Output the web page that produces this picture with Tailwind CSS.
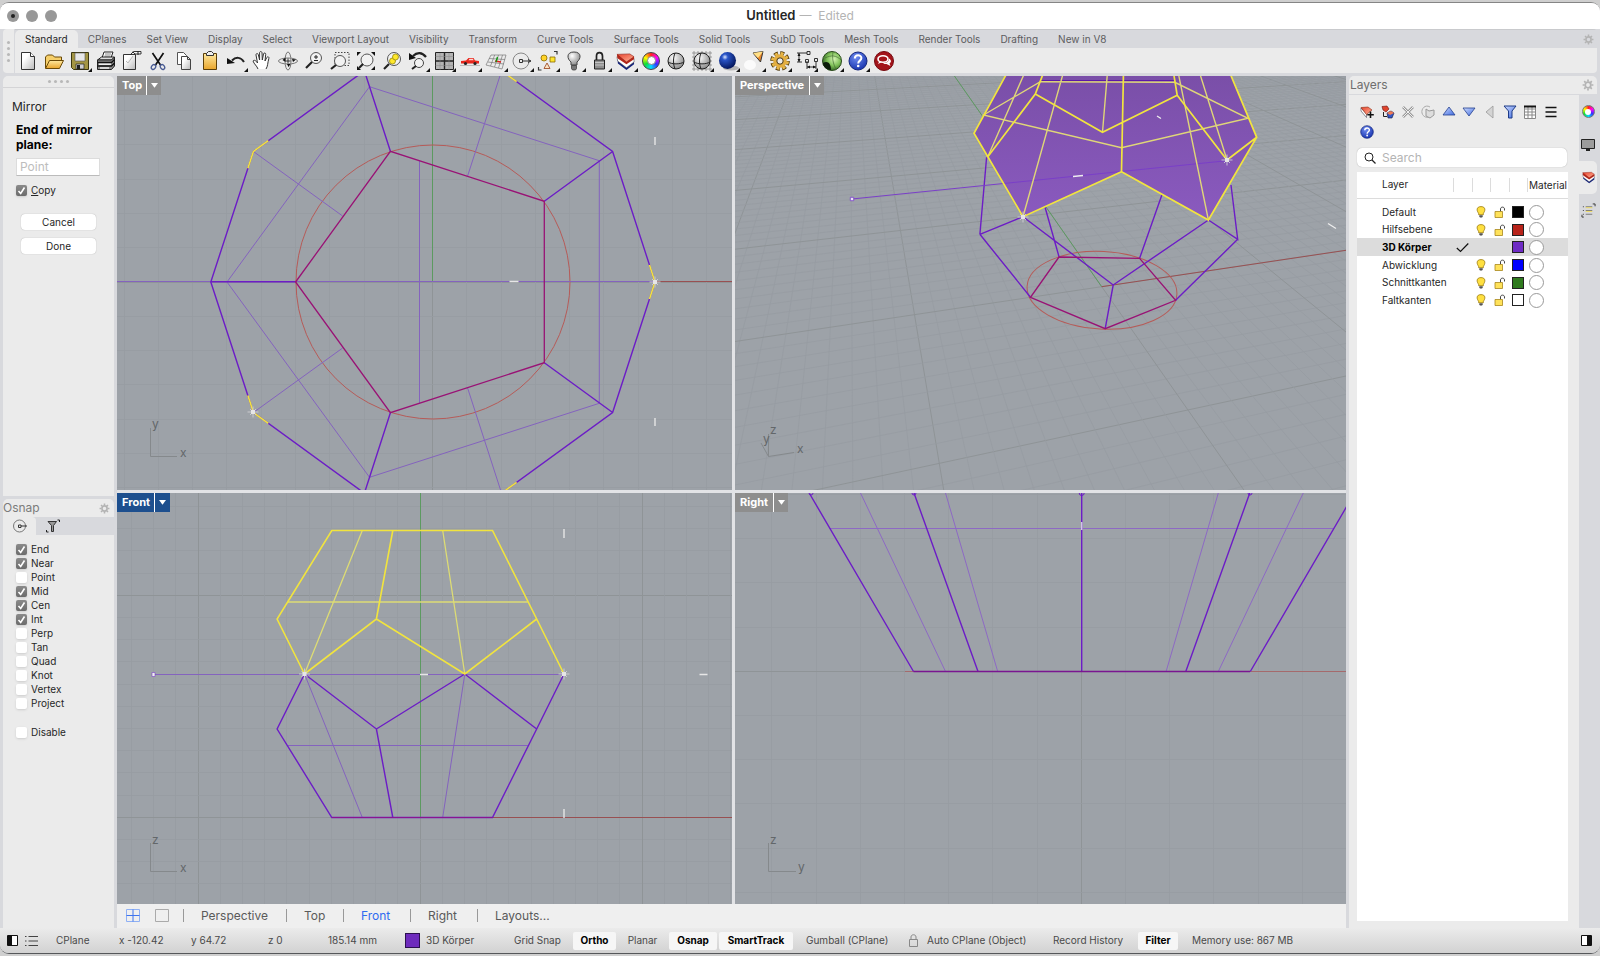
<!DOCTYPE html>
<html lang="en">
<head>
  <meta charset="UTF-8" />
  <title>Untitled — Edited</title>
  <meta name="viewport" content="width=device-width, initial-scale=1.0" />
  <script src="https://cdn.jsdelivr.net/npm/@tailwindcss/browser@4"></script>
</head>
<body class="h-screen overflow-hidden bg-[#cfcfcf] font-['Inter','Liberation_Sans',sans-serif] text-[10px] text-[#262626]">

  <!-- Shared symbols -->
  <svg class="absolute w-0 h-0" aria-hidden="true">
    <defs>
      <linearGradient id="paper" x1="0" y1="0" x2="1" y2="1"><stop offset=".3" stop-color="#fff" /><stop offset="1" stop-color="#b9b9b9" /></linearGradient>
      <linearGradient id="gold" x1="0" y1="0" x2="0" y2="1"><stop offset="0" stop-color="#ffe9a0" /><stop offset="1" stop-color="#e9a52b" /></linearGradient>
      <linearGradient id="blueTri" x1="0" y1="0" x2="1" y2="1"><stop offset="0" stop-color="#cfdcff" /><stop offset="1" stop-color="#3f6be0" /></linearGradient>
      <linearGradient id="solid" x1="0" y1="0" x2="0" y2="1"><stop offset="0" stop-color="#7a4fa8" /><stop offset="1" stop-color="#8a5abf" /></linearGradient>
      <linearGradient id="redTop" x1="0" y1="0" x2="1" y2="1"><stop offset="0" stop-color="#e8402a" /><stop offset="1" stop-color="#ffb59a" /></linearGradient>
      <radialGradient id="ball" cx=".35" cy=".3" r=".8"><stop offset="0" stop-color="#fff" /><stop offset="1" stop-color="#808080" /></radialGradient>
      <radialGradient id="blueBall" cx=".35" cy=".3" r=".7"><stop offset="0" stop-color="#dfe9ff" /><stop offset=".25" stop-color="#2a55c8" /><stop offset="1" stop-color="#05185e" /></radialGradient>
      <radialGradient id="greenBall" cx=".6" cy=".4" r=".7"><stop offset="0" stop-color="#d6f5b4" /><stop offset=".5" stop-color="#7fc058" /><stop offset="1" stop-color="#1c4a14" /></radialGradient>
      <radialGradient id="helpBall" cx=".4" cy=".3" r=".7"><stop offset="0" stop-color="#6f8cf0" /><stop offset="1" stop-color="#1a36b0" /></radialGradient>
      <symbol id="more" viewBox="0 0 26 24"><path d="M25 19v4h-4z" fill="#111" /></symbol>
      <symbol id="gear" viewBox="0 0 12 12">
        <g stroke="#b4b4b4" fill="none"><circle cx="6" cy="6" r="2.800" stroke-width="1.800" /><path d="M6 .6v2M6 9.400v2M.6 6h2M9.400 6h2M2.200 2.200l1.400 1.400M8.400 8.400l1.400 1.400M9.800 2.200L8.400 3.600M2.200 9.800l1.400-1.400" stroke-width="1.700" /></g>
      </symbol>
      <symbol id="layers" viewBox="0 0 20 20">
        <path d="M1.500 7l.5 5 9 7 8-6V9l-8 5z" fill="#16247c" />
        <path d="M1 5l.7 4.500 9.300 7 8-6V7z" fill="#fff" stroke="#333" stroke-width=".5" />
        <path d="M1 3l.5 3.500L11 13l8-5.500V5z" fill="#b3261a" />
        <path d="M1 2.500L14.500 2 19 5l-8 5.500z" fill="url(#redTop)" stroke="#8a1a10" stroke-width=".6" />
      </symbol>
      <symbol id="help" viewBox="0 0 20 20">
        <circle cx="10" cy="10" r="9" fill="url(#helpBall)" stroke="#14267c" /><path d="M6.800 7.600c0-4.600 6.600-4.300 6.600-.5 0 2.500-3.200 2.600-3.200 5.300" fill="none" stroke="#fff" stroke-width="2" /><circle cx="10.200" cy="15" r="1.300" fill="#fff" />
      </symbol>
      <symbol id="bulb" viewBox="0 0 10 12"><path d="M5 .6c5 0 4.400 4.400 2.400 6.600v1.500H2.600V7.200C.6 5 0 .6 5 .6z" fill="#ffe040" stroke="#9a7a10" stroke-width=".8" /><path d="M3.300 9.200h3.400v1.700l-1.700.8-1.700-.8z" fill="#555" /></symbol>
      <symbol id="unlocked" viewBox="0 0 12 12"><path d="M6.500 5.500V3c0-2.500 4-2.500 4 0v1.500" fill="none" stroke="#444" /><path d="M1 5.500h7.500v6H1z" fill="#ffe25a" stroke="#a8861c" stroke-width=".8" /></symbol>
      <symbol id="tick" viewBox="0 0 13 13"><path d="M.8 7l3.700 3.500L12.300 2.500" fill="none" stroke="#111" stroke-width="1.200" /></symbol>
      <symbol id="snapPoint" viewBox="-6 -6 12 12" overflow="visible"><path d="M-5.500 0h11M0-5.500v11M-3-3l6 6M3-3l-6 6" stroke="#cfcfd2" stroke-width=".9" /><path d="M-2-2h4v4h-4z" fill="#e6e6e6" /></symbol>
    </defs>
  </svg>

  <div class="flex flex-col h-full pt-[2px] pb-[2px]">
    <div class="flex flex-col flex-1 min-h-0 overflow-hidden rounded-[9px] border-t border-b border-t-[#858585] border-b-[#55575a] bg-[#d8d9dd]">

      <!-- Title bar -->
      <header class="relative flex items-center justify-center gap-[4px] h-[26px] shrink-0 bg-white text-[13px]">
        <div class="absolute left-[7px] flex gap-[7px]">
          <button aria-label="Close" class="flex items-center justify-center size-[12px] rounded-full bg-[#989898]"><span class="size-[4px] rounded-full bg-[#222]"></span></button>
          <button aria-label="Minimize" class="size-[12px] rounded-full bg-[#989898]"></button>
          <button aria-label="Zoom" class="size-[12px] rounded-full bg-[#989898]"></button>
        </div>
        <h1 class="font-semibold">Untitled</h1>
        <span class="text-[12px] text-[#b4b4b4]">— &nbsp;Edited</span>
      </header>

      <!-- Toolbar tabs -->
      <div class="flex h-[44px] shrink-0 mx-[3px] rounded-[4px] overflow-hidden">
        <div class="flex flex-col items-center justify-center gap-[3px] w-[12px] bg-[#ebebeb] border-r border-[#d8d9dd]">
          <i class="size-[3px] rounded-full bg-[#b8b8b8]"></i><i class="size-[3px] rounded-full bg-[#b8b8b8]"></i><i class="size-[3px] rounded-full bg-[#b8b8b8]"></i><i class="size-[3px] rounded-full bg-[#b8b8b8]"></i>
        </div>
        <div class="flex-1 min-w-0">
          <nav class="flex items-center h-[19px] border-t border-[#c9cacd] text-[#5c5c5e] whitespace-nowrap">
            <button class="h-full px-[10px] rounded-t-[5px] bg-[#ebebeb] text-[#262626]">Standard</button>
            <button class="px-[10px]">CPlanes</button>
            <button class="px-[10px]">Set View</button>
            <button class="px-[10px]">Display</button>
            <button class="px-[10px]">Select</button>
            <button class="px-[10px]">Viewport Layout</button>
            <button class="px-[10px]">Visibility</button>
            <button class="px-[10px]">Transform</button>
            <button class="px-[10px]">Curve Tools</button>
            <button class="px-[10px]">Surface Tools</button>
            <button class="px-[10px]">Solid Tools</button>
            <button class="px-[10px]">SubD Tools</button>
            <button class="px-[10px]">Mesh Tools</button>
            <button class="px-[10px]">Render Tools</button>
            <button class="px-[10px]">Drafting</button>
            <button class="px-[10px]">New in V8</button>
            <button aria-label="Toolbar options" class="ml-auto mr-[3px]"><svg class="size-[11px]"><use href="#gear" /></svg></button>
          </nav>

          <!-- Standard toolbar -->
          <div class="flex items-center h-[25px] bg-[#ebebeb]">
            <div class="flex w-[882px] [&>button]:flex-1 [&_svg]:w-[26px] [&_svg]:h-[24px]">
              <button aria-label="New"><svg viewBox="0 0 26 24"><path d="M6.500 3.500h9l4 4v13h-13z" fill="url(#paper)" stroke="#333" /><path d="M15.500 3.500v4h4" fill="#fff" stroke="#333" /></svg></button>
              <button aria-label="Open"><svg viewBox="0 0 26 24"><path d="M4.500 19V8l2-2h5l2 2h7v3" fill="#f6cf6a" stroke="#6a4a08" /><path d="M4.500 19.500l4-8h14l-4 8z" fill="url(#gold)" stroke="#6a4a08" /></svg></button>
              <button aria-label="Save"><svg viewBox="0 0 26 24"><path d="M4.500 3.500h17v17h-15l-2-2z" fill="#a39543" stroke="#3a3510" /><path d="M8 4h10v8H8z" fill="#e8e8e8" stroke="#555" stroke-width=".6" /><path d="M9 15h8v5H9z" fill="#d0d0d0" stroke="#222" stroke-width=".7" /><path d="M10 16h3v4h-3z" fill="#222" /><use href="#more" /></svg></button>
              <button aria-label="Print"><svg viewBox="0 0 26 24"><path d="M9 9l2-6h9l-2 6z" fill="#fff" stroke="#222" /><path d="M12 5h6M11.500 7h6" stroke="#888" /><path d="M4.500 11l4-3h13l-3 3z" fill="#ddd" stroke="#222" /><path d="M4.500 11h14l3-3v9l-3 3.500h-14z" fill="#8d8d8d" stroke="#222" /><path d="M4.500 13.500h14l3-3M4.500 17h14l3-3" fill="none" stroke="#111" stroke-width="1.400" /><path d="M7 19h9M6 15.200h12" stroke="#eee" stroke-width="1.500" /></svg></button>
              <button aria-label="Document properties"><svg viewBox="0 0 26 24"><path d="M4.500 5.500h12v15h-12z" fill="url(#paper)" stroke="#333" /><path d="M7 12l2 2 5-7" fill="none" stroke="#bbb" /><path d="M11 6l3-3 2 2h6V2.500h-7l-2 1" fill="#f4f4f4" stroke="#222" stroke-width=".9" /><path d="M19 2v4" stroke="#222" /></svg></button>
              <button aria-label="Cut"><svg viewBox="0 0 26 24"><path d="M7.500 4l8 12M18.500 4l-8 12" stroke="#111" stroke-width="1.700" /><g fill="none" stroke="#4a5c94" stroke-width="1.300"><ellipse cx="8.500" cy="18" rx="2" ry="2.600" transform="rotate(35 8.500 18)" /><ellipse cx="17.500" cy="18" rx="2" ry="2.600" transform="rotate(-35 17.500 18)" /></g></svg></button>
              <button aria-label="Copy"><svg viewBox="0 0 26 24"><path d="M6.500 3.500h6l3 3v9h-9z" fill="#fff" stroke="#555" /><path d="M10.500 7.500h6l3 3v10h-9z" fill="url(#paper)" stroke="#444" /><path d="M16.500 7.500v3h3" fill="none" stroke="#444" /></svg></button>
              <button aria-label="Paste"><svg viewBox="0 0 26 24"><path d="M6.500 4.500h13v16h-13z" fill="url(#gold)" stroke="#5c3f08" /><path d="M9.500 6.500v-2l2-2h3l2 2v2z" fill="#eee" stroke="#333" /></svg></button>
              <button aria-label="Undo"><svg viewBox="0 0 26 24"><path d="M9 11.500c4-4 9-3.500 12 1.500" fill="none" stroke="#222" stroke-width="2" /><path d="M4 9v6l8-1z" fill="#111" /><use href="#more" /></svg></button>
              <button aria-label="Pan"><svg viewBox="0 0 26 24"><path d="M9 20c-1-3-4-5-5-8 1-1.500 3-.5 4.500 2L7 6c0-2 2-2 2.400 0l1.200 5V4c0-2 2.300-2 2.400 0l.3 7 1.200-6c.5-1.700 2.500-1.200 2.200.5L16 12l1.800-3.500c1-1.400 2.700-.5 2 1.200C18.500 14 19 17 17 20" fill="#fff" stroke="#333" /></svg></button>
              <button aria-label="Rotate view"><svg viewBox="0 0 26 24"><g fill="none" stroke="#777"><ellipse cx="13" cy="12" rx="9.500" ry="3" /><ellipse cx="13" cy="12" rx="3" ry="9" /></g><path d="M10.500 8.500v4.500l-3-2zM17 10l4 .5-3 2.500zM12 15l3.500 0-2 3z" fill="#111" /><path d="M13 9.500v5M10.500 12h5" stroke="#111" stroke-width=".8" /></svg></button>
              <button aria-label="Zoom dynamic"><svg viewBox="0 0 26 24"><circle cx="15" cy="9" r="5.500" fill="#f2f2f2" stroke="#555" /><path d="M15 6v4M13 8h4M13 11.500h4" stroke="#222" /><path d="M11 13l-6 6" stroke="#222" stroke-width="2.200" /></svg></button>
              <button aria-label="Zoom window"><svg viewBox="0 0 26 24"><path d="M8 3.500h14v13H8z" fill="none" stroke="#444" stroke-dasharray="1.500 1.500" /><circle cx="13" cy="12" r="5.500" fill="#f2f2f2" stroke="#555" /><path d="M9 16l-5 4" stroke="#222" stroke-width="2.200" /></svg></button>
              <button aria-label="Zoom extents"><svg viewBox="0 0 26 24"><circle cx="14" cy="11" r="6" fill="#f2f2f2" stroke="#555" /><path d="M10 15l-4 4" stroke="#222" stroke-width="2.200" /><path d="M4 3h4L4 7zM22 3v4l-4-4zM4 21v-4l4 4zM22 21h-4l4-4z" fill="#111" /></svg></button>
              <button aria-label="Zoom selected"><svg viewBox="0 0 26 24"><circle cx="15" cy="10" r="6.500" fill="#f2f2f2" stroke="#555" /><circle cx="13.500" cy="12" r="3" fill="#ffe92c" stroke="#8a7a00" stroke-width=".7" /><circle cx="16.500" cy="8" r="3" fill="#ffe92c" stroke="#8a7a00" stroke-width=".7" /><path d="M10 15l-5 5" stroke="#222" stroke-width="2.200" /></svg></button>
              <button aria-label="Undo view change"><svg viewBox="0 0 26 24"><path d="M8 7c4-4 9-4 13 1" fill="none" stroke="#222" stroke-width="2.200" /><path d="M4 4v7l7-2z" fill="#111" /><circle cx="14" cy="14" r="4.500" fill="#f2f2f2" stroke="#444" /><path d="M11 17l-4 3" stroke="#222" stroke-width="2" /><use href="#more" /></svg></button>
              <button aria-label="4 viewports"><svg viewBox="0 0 26 24"><path d="M4.500 3.500h18v17h-18z" fill="#b4b4b4" stroke="#222" /><path d="M4 12h19M13.500 3v18" stroke="#222" stroke-width="1.400" /><path d="M4.500 7.500h18M4.500 16.500h18M9 4v17M18 4v17" stroke="#888" stroke-width=".5" /><use href="#more" /></svg></button>
              <button aria-label="Set view"><svg viewBox="0 0 26 24"><path d="M4 14.500v-2.500l5-.5 2.500-2.500h5l1.500 2.500 4 .5v2.500z" fill="#e8261c" /><path d="M12.500 9.800h3.500l.5 1.500h-5z" fill="#fbd6d2" /><circle cx="8.500" cy="14.500" r="1.600" fill="#222" /><circle cx="18" cy="14.500" r="1.600" fill="#222" /><path d="M3 16.500h20" stroke="#999" stroke-width=".6" /><use href="#more" /></svg></button>
              <button aria-label="Set CPlane"><svg viewBox="0 0 26 24"><path d="M8 6h15l-4 14-16-4zM6 9.500l16 1M5 13l16 2M11.700 6L7.500 17M15.500 6l-4 12M19.500 6l-4 13" fill="none" stroke="#777" stroke-width=".7" /><path d="M12 12l6 1" stroke="#d22" stroke-width="1.400" /><path d="M13 13l1.500-5" stroke="#191" stroke-width="1.400" /><use href="#more" /></svg></button>
              <button aria-label="Object snap"><svg viewBox="0 0 26 24"><circle cx="12" cy="12" r="8" fill="none" stroke="#888" /><path d="M10.500 10.500h3v3h-3zM13.500 12h8M19 10.500l3 1.500-3 1.500" fill="none" stroke="#333" /><use href="#more" /></svg></button>
              <button aria-label="Select"><svg viewBox="0 0 26 24"><circle cx="9" cy="9" r="3" fill="#ffd428" stroke="#8a6a00" stroke-width=".8" /><path d="M15 8h5v5h-5z" fill="#ffe52c" stroke="#8a6a00" stroke-width=".8" /><path d="M12 14l3 5.500H9z" fill="#fbe3c4" stroke="#a0502a" stroke-width=".9" /><path d="M19 2.500h3v3M3.500 18v3h3" fill="none" stroke="#333" stroke-width="1.200" /><use href="#more" /></svg></button>
              <button aria-label="Hide"><svg viewBox="0 0 26 24"><path d="M13 3c8 0 7 7 3 10v3h-6v-3C6 10 5 3 13 3z" fill="url(#ball)" stroke="#444" /><path d="M10.500 16.500h5v3l-1 1.500h-3l-1-1.500z" fill="#777" stroke="#333" stroke-width=".7" /><use href="#more" /></svg></button>
              <button aria-label="Lock"><svg viewBox="0 0 26 24"><path d="M9.500 11V7c0-4.500 6-4.500 6 0v4" fill="none" stroke="#222" stroke-width="1.700" /><path d="M7.500 11h10v9h-10z" fill="#8e8e8e" stroke="#222" /><path d="M8 13.500h9M8 16h9" stroke="#c4c4c4" /><use href="#more" /></svg></button>
              <button aria-label="Layers"><svg viewBox="0 0 26 24"><use href="#layers" x="3" y="3" width="19" height="19" /><use href="#more" /></svg></button>
              <button aria-label="Object color" class="flex items-center justify-center"><span class="relative flex items-center justify-center size-[18px] rounded-full bg-[conic-gradient(#f22,#f0f,#33f,#0df,#1d3,#ff0,#f22)] border border-[#444]"><span class="size-[9px] rounded-full bg-white border border-[#888]"></span><span class="absolute -right-[4px] -bottom-[3px] border-[2px] border-transparent border-r-[#111] border-b-[#111]"></span></span></button>
              <button aria-label="Wireframe"><svg viewBox="0 0 26 24"><circle cx="13" cy="12" r="8" fill="url(#ball)" stroke="#222" /><path d="M5 13c4 2.500 12 2.500 16 0M12 4c-2 5-2 11 0 16" fill="none" stroke="#222" /></svg></button>
              <button aria-label="Shaded"><svg viewBox="0 0 26 24"><path d="M3 4h20M3 8h20M3 12h20M3 16h20M3 20h20M5 2v20M9 2v20M13 2v20M17 2v20M21 2v20" stroke="#888" stroke-width=".8" /><circle cx="13" cy="12" r="8" fill="url(#ball)" stroke="#222" /><path d="M5 13c4 2.500 12 2.500 16 0M12 4c-2 5-2 11 0 16" fill="none" stroke="#222" /><use href="#more" /></svg></button>
              <button aria-label="Render"><svg viewBox="0 0 26 24"><ellipse cx="16" cy="19" rx="8" ry="2.500" fill="#b5b5b5" /><circle cx="12.500" cy="11.500" r="8.500" fill="url(#blueBall)" /><use href="#more" /></svg></button>
              <button aria-label="Spotlight"><svg viewBox="0 0 26 24"><ellipse cx="9" cy="16" rx="6" ry="5" fill="#fff" opacity=".8" /><path d="M12 4l10-1.500-2.500 10.500z" fill="#e8872c" stroke="#333" /><path d="M12 4l10-1.500-5 6.500z" fill="#ffdf86" /><use href="#more" /></svg></button>
              <button aria-label="Options"><svg viewBox="0 0 26 24"><circle cx="13" cy="12" r="7.800" fill="none" stroke="#4a3306" stroke-width="4" stroke-dasharray="3.900 2.226" /><circle cx="13" cy="12" r="7.500" fill="none" stroke="#e8b84a" stroke-width="3" stroke-dasharray="2.900 2.990" stroke-dashoffset="-.4" /><circle cx="13" cy="12" r="5" fill="none" stroke="#e3ae40" stroke-width="3.500" /><circle cx="13" cy="12" r="3.200" fill="#ebebeb" stroke="#4a3306" /><use href="#more" /></svg></button>
              <button aria-label="Dimensions"><svg viewBox="0 0 26 24"><path d="M4 4h5M4 13h5M6 4v9M9 4h5M14 2.500h3v3h-3zM14 12v8M23 12v8M14 18h9M21.500 9.500h3v3h-3zM12.500 10.500h3v3h-3z" fill="none" stroke="#333" /><path d="M14 18l3-1.500v3zM23 18l-3-1.500v3zM6 4l1.500 3h-3zM6 13l1.500-3h-3z" fill="#111" /><use href="#more" /></svg></button>
              <button aria-label="Grasshopper"><svg viewBox="0 0 26 24"><circle cx="13" cy="12" r="9.500" fill="url(#greenBall)" stroke="#2a4a1c" /><path d="M4 14c5-3 8 1 8 7-4 0-8-3-8-7z" fill="#0c1c0a" /><path d="M6 9c6-3 11-3 16 2M14 3c-1 6 0 12 3 17" fill="none" stroke="#456f34" stroke-width=".7" /><use href="#more" /></svg></button>
              <button aria-label="Help"><svg viewBox="0 0 26 24"><use href="#help" x="3" y="2" width="20" height="20" /><use href="#more" /></svg></button>
              <button aria-label="Feedback"><svg viewBox="0 0 26 24"><circle cx="13" cy="12" r="9.500" fill="#a3151b" stroke="#760a10" /><ellipse cx="12" cy="10" rx="5" ry="3.300" fill="none" stroke="#fff" stroke-width="1.600" /><path d="M8.500 12l-1.500 3 4-2zM18 9.500c3 2 2 4 .5 5l1 2.500-4-2c-1.500 0-2.500 0-3.500-1 4 0 6-1.500 6-4.500z" fill="#fff" /></svg></button>
            </div>
          </div>
        </div>
      </div>

      <!-- Work area -->
      <main class="flex flex-1 min-h-0 pt-[3px]">

        <!-- Left panels -->
        <aside class="flex flex-col w-[111px] ml-[3px] mr-[3px] shrink-0">
          <section class="h-[420px] shrink-0 rounded-t-[5px] bg-[#ebebeb]">
            <div class="flex items-center justify-center gap-[3px] h-[12px] border-b border-[#d4d4d6]">
              <i class="size-[3px] rounded-full bg-[#b8b8b8]"></i><i class="size-[3px] rounded-full bg-[#b8b8b8]"></i><i class="size-[3px] rounded-full bg-[#b8b8b8]"></i><i class="size-[3px] rounded-full bg-[#b8b8b8]"></i>
            </div>
            <div class="px-[13px] pt-[11px]">
              <h2 class="-ml-[4px] text-[12px] leading-[15px]">Mirror</h2>
              <label for="point" class="block mt-[8px] text-[12px] leading-[15px] font-bold text-black">End of mirror plane:</label>
              <input id="point" type="text" placeholder="Point" class="block w-[84px] h-[18px] mt-[6px] px-[3px] bg-white border border-[#dcdcdc] border-b-[#bbb] text-[12px] placeholder:text-[#bdbdbd]" />
              <label class="relative flex items-center gap-[4px] mt-[7px] h-[14px]">
                <input type="checkbox" checked class="peer appearance-none size-[11px] rounded-[2px] bg-white checked:bg-[linear-gradient(#8a8a8a,#6c6c6c)] shadow-sm" />
                <svg viewBox="0 0 11 11" class="absolute left-0 hidden peer-checked:block size-[11px]"><path d="M2.500 6l2.200 2.500L8.500 2.500" fill="none" stroke="#fff" stroke-width="1.600" /></svg>
                <span><u>C</u>opy</span>
              </label>
              <button class="block w-[75px] h-[16px] mt-[17px] ml-[5px] rounded-[4px] bg-white shadow-[0_0_1px_#999] leading-[15px]">Cancel</button>
              <button class="block w-[75px] h-[16px] mt-[8px] ml-[5px] rounded-[4px] bg-white shadow-[0_0_1px_#999] leading-[15px]">Done</button>
            </div>
          </section>

          <section class="flex flex-col flex-1 min-h-0 mt-[3px] rounded-t-[5px] bg-[#ebebeb]">
            <div class="flex items-center justify-between h-[18px] pr-[4px]">
              <h2 class="text-[12px] text-[#7b7b7b]">Osnap</h2>
              <button aria-label="Osnap options"><svg class="size-[11px]"><use href="#gear" /></svg></button>
            </div>
            <div class="flex h-[18px] bg-[#d8d9dd]">
              <button aria-label="Osnap" class="flex items-center justify-center w-[33px] rounded-tr-[4px] bg-[#ebebeb]"><svg viewBox="0 0 14 14" class="size-[14px]"><circle cx="6.500" cy="7" r="6" fill="none" stroke="#777" /><path d="M5.500 6h2.500v2.500H5.500zM8 7h6" fill="none" stroke="#333" /></svg></button>
              <button aria-label="Selection filter" class="flex items-center justify-center w-[33px]"><svg viewBox="0 0 14 14" class="size-[14px]"><path d="M2 2.500h8.500L7.500 6.500v6h-2v-6z" fill="#999" stroke="#333" /><path d="M11.500 1h2v2M.5 11v2h2" fill="none" stroke="#222" /></svg></button>
            </div>
            <!-- rows are filled from the snap list below -->
            <div id="snaps" class="flex flex-col pl-[13px] pt-[7px]"></div>
          </section>
        </aside>

        <!-- Viewports -->
        <div class="flex flex-col flex-1 min-w-0">
          <div class="grid flex-1 min-h-0 grid-cols-[615fr_611fr] grid-rows-[414fr_411fr] gap-[3px] bg-[#e2e3e6]">

            <section class="relative overflow-hidden bg-[#9da2a8]">
              <svg class="absolute inset-0 w-full h-full" viewBox="117 76 615 414" preserveAspectRatio="xMidYMid slice" fill="none">
                <g data-grid="432.600 282 34.270 117 76 732 490"></g>
                <path d="M432.500 76V282" stroke="#5c9a60" />
                <path d="M655 281.500H732" stroke="#985052" />
                <circle cx="433" cy="282" r="137" stroke="#b65b58" />
                <g stroke="#8463be">
                  <path d="M117 281.500H655M369.500 86.700L227 282l142.500 195.300L599.300 403.300V160.700z" />
                  <path d="M253.400 151.500L342.600 216M253.400 412.500L342.600 348M419.500 160.700V403.300M501.600 70.800L467.600 176M501.600 493.200L467.600 388" />
                </g>
                <g stroke="#6c1cc6" stroke-width="1.400">
                  <path d="M655 282L612.600 151.500 501.600 70.800H364.400L253.400 151.500 210.800 282l42.600 130.500L364.400 493.200H501.600L612.600 412.500z" />
                  <path d="M210.800 281.700H295.600M364.400 70.800L390.400 151.300M364.400 493.200L390.400 412.700M612.600 151.500L544.300 201.300M612.600 412.500L544.300 362.700" />
                </g>
                <path d="M295.600 282L390.400 151.300 544.300 201.300V362.700L390.400 412.700z" stroke="#991275" stroke-width="1.300" />
                <path d="M268.300 140.700L253.400 151.500 247.900 168.300M649.500 265L655 282 649.500 299M247.900 395.500L253.400 412.500 268.300 423.300M501.600 70.800L516.600 81.700M501.600 493.200L516.600 482.300" stroke="#f1e43e" stroke-width="1.600" />
                <path d="M655 137v8M655 418v8M509.500 281.500h9" stroke="#e6e6e6" stroke-width="1.400" />
                <use href="#snapPoint" x="649" y="276" width="12" height="12" /><use href="#snapPoint" x="247" y="406" width="12" height="12" />
                <path d="M150.500 428v28.500H177" stroke="#85898c" />
                <g fill="#63676a" font-size="12"><text x="152" y="428">y</text><text x="180" y="457">x</text></g>
              </svg>
              <div class="absolute top-0 left-0 flex items-center h-[19px] bg-[#8e8e8e] text-[11px] font-bold text-white"><span class="w-[29px] pl-[5px]">Top</span><button aria-label="Top menu" class="flex items-center justify-center w-[15px] h-full border-l border-white"><svg viewBox="0 0 6 4" class="w-[7px]"><path d="M0 0h6L3 4z" fill="#fff" /></svg></button></div>
            </section>

            <section class="relative overflow-hidden bg-[#9da2a8]">
              <svg class="absolute inset-0 w-full h-full" viewBox="735 76 611 414" preserveAspectRatio="xMidYMid slice" fill="none">
                <g id="floor"></g>
                <path d="M954.200 75.700L1101.700 286.700" stroke="#5c9a60" />
                <path d="M1101.700 286.700L1346 250.300" stroke="#985052" />
                <ellipse cx="1102" cy="290.300" rx="75" ry="38.800" transform="rotate(3 1102 290)" stroke="#b65b58" />
                <path d="M979.900 234.300L986.600 157.300M979.900 234.300L1023 216.700 1113.200 285 1208.400 220 1237.700 239.300 1231 185M979.900 234.300L1030.500 297.300M1113.200 285L1105.200 328.700M1237.700 239.300L1175.600 300.300M1059 256.700L1044.700 206M1139.600 258.300L1162.200 194" stroke="#6c1cc6" stroke-width="1.400" />
                <path d="M1030.500 297.300L1105.200 328.700 1175.600 300.300 1139.600 258.300 1059 257z" stroke="#991275" stroke-width="1.300" />
                <path d="M1005.600 75.700L974 133.300 1023 216.700 1121.500 171.700 1208.400 220 1256.700 137.300 1231 75.700z" fill="url(#solid)" />
                <path d="M1040.400 80.500H1174.800" stroke="#5d18a8" />
                <path d="M851.800 199L1227 160.700" stroke="#7a3fc8" />
                <path d="M983.500 115L1040.400 81.700 1174.800 82.300 1248 118.300 1121.500 147.700zM1023 216.700L1062.500 75.700M1208.400 220L1178.800 75.700M1102.500 132.300L1107.200 75.700M987.800 156.700L1023.400 75.700M1227 160L1200.500 75.700" stroke="#dfd678" stroke-width="1.400" />
                <path d="M1005.600 75.700L974 133.300 1023 216.700 1121.500 171.700 1208.400 220 1256.700 137.300 1231 75.700M1042.400 75.700L1035.300 94 987.800 156.700M1035.300 94L1102.500 132.300 1177.200 95.300 1174 75.700M1177.200 95.300L1227 160 1256.700 137.300M1121.500 171.700L1123.400 75.700" stroke="#f1e43e" stroke-width="1.700" />
                <path d="M1073 176.500l10-1M1157 116l4 2.500M1328 223.500l8 5" stroke="#eee" stroke-width="1.300" />
                <path d="M850.300 197.300h3.400v3.400h-3.400z" fill="#e9e4f5" stroke="#7a3fc8" stroke-width=".8" />
                <use href="#snapPoint" x="1221" y="154" width="12" height="12" /><use href="#snapPoint" x="1017" y="211" width="12" height="12" />
                <path d="M768.500 434v22.500L794 452.500M768.500 456.500L761 443" stroke="#85898c" />
                <g fill="#63676a" font-size="12"><text x="770" y="434">z</text><text x="763" y="443">y</text><text x="797" y="453">x</text></g>
              </svg>
              <div class="absolute top-0 left-0 flex items-center h-[19px] bg-[#8e8e8e] text-[11px] font-bold text-white"><span class="w-[74px] pl-[5px]">Perspective</span><button aria-label="Perspective menu" class="flex items-center justify-center w-[15px] h-full border-l border-white"><svg viewBox="0 0 6 4" class="w-[7px]"><path d="M0 0h6L3 4z" fill="#fff" /></svg></button></div>
            </section>

            <section class="relative overflow-hidden bg-[#9da2a8]">
              <svg class="absolute inset-0 w-full h-full" viewBox="117 493 615 411" preserveAspectRatio="xMidYMid slice" fill="none">
                <g data-grid="420.100 817.300 22.200 117 493 732 904"></g>
                <path d="M420.500 493V817" stroke="#5c9a60" />
                <path d="M492 817.500H732" stroke="#985052" />
                <g stroke="#8463be"><path d="M153 674.500H564M288 745.500H527.800M304.500 674L362.300 817.500M464.800 674L442.700 817.500" /></g>
                <path d="M304.500 674L277.100 729 331.800 817.500H492.500L536.700 729 564 674M304.500 674L376.400 729 464.800 674 536.700 729M376.400 729L392.800 817.500" stroke="#6c1cc6" stroke-width="1.400" />
                <path d="M331.800 817.500H492.500" stroke="#8a1490" stroke-width="1.200" />
                <g stroke="#dddc74" stroke-width="1.300"><path d="M288 602H527.800M304.500 674L362.300 530.500M464.800 674L442.700 530.500" /></g>
                <path d="M304.500 674L277.100 619 331.800 530.500H492.500L536.700 619 564 674M304.500 674L376.400 619 464.800 674 536.700 619M376.400 619L392.800 530.500" stroke="#f1e43e" stroke-width="1.600" />
                <path d="M564 529v9M564 809v9M420 674.500h8M699.500 674.500h8" stroke="#e6e6e6" stroke-width="1.400" />
                <path d="M152 672.500h3v4h-3z" fill="#eee" stroke="#7a3fc8" stroke-width=".6" />
                <use href="#snapPoint" x="298.500" y="668" width="12" height="12" /><use href="#snapPoint" x="558" y="668" width="12" height="12" />
                <path d="M150.500 843v28.500H177" stroke="#85898c" />
                <g fill="#63676a" font-size="12"><text x="152" y="844">z</text><text x="180" y="872">x</text></g>
              </svg>
              <div class="absolute top-0 left-0 flex items-center h-[19px] bg-[#1d4f8e] text-[11px] font-bold text-white"><span class="w-[37px] pl-[5px]">Front</span><button aria-label="Front menu" class="flex items-center justify-center w-[16px] h-full border-l border-white"><svg viewBox="0 0 6 4" class="w-[7px]"><path d="M0 0h6L3 4z" fill="#fff" /></svg></button></div>
            </section>

            <section class="relative overflow-hidden bg-[#9da2a8]">
              <svg class="absolute inset-0 w-full h-full" viewBox="735 493 611 411" preserveAspectRatio="xMidYMid slice" fill="none">
                <g data-grid="1081.200 671.300 44.200 735 493 1346 904"></g>
                <path d="M905 671.500H1346" stroke="#a56a6c" />
                <path d="M829.600 528.500H1333.800M945.500 671.500L860.500 493M997.700 671.500L945.500 493M1218.300 671.500L1303.300 493M1166.100 671.500L1218.300 493" stroke="#8d69c4" />
                <path d="M809.500 493.500L913.500 671.500M1250.300 671.500L1354.300 493.500M978 671.500L914 493M1185.800 671.500L1249.800 493M1081.700 671.500V493" stroke="#6c1cc6" stroke-width="1.400" />
                <path d="M913.500 671.500H1250" stroke="#7a1590" stroke-width="1.400" />
                <g stroke="#6c1cc6"><circle cx="811" cy="493" r="2" /><circle cx="914" cy="493" r="2" /><circle cx="1081.700" cy="493" r="2.500" /><circle cx="1250" cy="493" r="2" /></g>
                <path d="M1081.700 522v8" stroke="#d3c4ea" stroke-width="1.500" />
                <path d="M768.500 843v28.500H796" stroke="#85898c" />
                <g fill="#63676a" font-size="12"><text x="770" y="844">z</text><text x="798" y="871">y</text></g>
              </svg>
              <div class="absolute top-0 left-0 flex items-center h-[19px] bg-[#8e8e8e] text-[11px] font-bold text-white"><span class="w-[38px] pl-[5px]">Right</span><button aria-label="Right menu" class="flex items-center justify-center w-[15px] h-full border-l border-white"><svg viewBox="0 0 6 4" class="w-[7px]"><path d="M0 0h6L3 4z" fill="#fff" /></svg></button></div>
            </section>
          </div>

          <!-- Viewport tabs -->
          <nav class="flex items-center h-[24px] shrink-0 pl-[9px] pb-[2px] bg-[#efefef] text-[12px] text-[#5a5a5a]">
            <button aria-label="Four views" class="w-[29px]"><svg viewBox="0 0 14 13" class="w-[14px] h-[13px]"><path d="M.5.5h13v12H.5z" fill="none" stroke="#8fb0f4" /><path d="M7 .5v12M.5 6.500h13" stroke="#3f74ee" /></svg></button>
            <button aria-label="Single view" class="w-[28px]"><svg viewBox="0 0 14 13" class="w-[14px] h-[13px]"><path d="M.5.5h13v12H.5z" fill="none" stroke="#aaa" /></svg></button>
            <a href="#" class="w-[103px] pl-[17px] leading-[13px] border-l border-[#999]">Perspective</a>
            <a href="#" class="w-[57px] pl-[17px] leading-[13px] border-l border-[#999]">Top</a>
            <a href="#" class="w-[67px] pl-[17px] leading-[13px] border-l border-[#999] text-[#2f6bf0]">Front</a>
            <a href="#" class="w-[67px] pl-[17px] leading-[13px] border-l border-[#999]">Right</a>
            <a href="#" class="pl-[17px] leading-[13px] border-l border-[#999]">Layouts...</a>
          </nav>
        </div>

        <!-- Layers panel -->
        <aside class="flex flex-col w-[248px] ml-[3px] mr-[3px] shrink-0 rounded-t-[5px] bg-[#ebebeb]">
          <div class="flex items-center justify-between h-[19px] pl-[1px] pr-[3px] border-b border-[#d8d9dd] shrink-0">
            <h2 class="text-[12px] text-[#6e6e6e]">Layers</h2>
            <button aria-label="Panel options"><svg class="size-[12px]"><use href="#gear" /></svg></button>
          </div>
          <div class="flex flex-1 min-h-0">
            <div class="flex flex-col flex-1 min-w-0 pl-[8px] pr-[11px] pt-[7px] pb-[7px]">
              <div class="grid grid-cols-10 w-[204px] shrink-0 [&>button]:h-[20px] [&_svg]:size-[14px] [&_svg]:mx-auto">
                <button aria-label="New layer"><svg viewBox="0 0 14 14"><path d="M1 3v3l5.500 6.500V9z" fill="#fff" stroke="#445" stroke-width=".6" /><path d="M1 2.500l7-.5 4 3-5.500 4.500z" fill="url(#redTop)" stroke="#8a2a10" stroke-width=".6" /><path d="M10.500 6.500v6.500M7.300 9.800h6.500" stroke="#111" stroke-width="1.600" /></svg></button>
                <button aria-label="New sublayer"><svg viewBox="0 0 14 14"><path d="M1 1.500l5-.5 2 3-3 3-3-2z" fill="#e0452c" stroke="#611" stroke-width=".6" /><path d="M2.500 7v4.500H6" fill="none" stroke="#222" /><path d="M6 8l4-2 3 2-2 5H7z" fill="#3457c4" stroke="#113" stroke-width=".6" /><path d="M6 8l4-2 3 2-4 2z" fill="#f27a52" /></svg></button>
                <button aria-label="Delete layer"><svg viewBox="0 0 14 14"><path d="M2 2l10 10M12 2L2 12" stroke="#9a9a9a" stroke-width="2.600" /><path d="M2 2l10 10M12 2L2 12" stroke="#eee" stroke-width="1" /></svg></button>
                <button aria-label="Duplicate layer"><svg viewBox="0 0 14 14"><path d="M9 2C4-1 0 4 1 8s5 5 7 4" fill="none" stroke="#aaa" /><path d="M5 4l3 2 5-1v5l-4 3-4-2z" fill="#ddd" stroke="#999" /></svg></button>
                <button aria-label="Move up"><svg viewBox="0 0 14 14"><path d="M7 2l6 8H1z" fill="url(#blueTri)" stroke="#24408e" stroke-width=".8" /></svg></button>
                <button aria-label="Move down"><svg viewBox="0 0 14 14"><path d="M7 11L1 3h12z" fill="url(#blueTri)" stroke="#24408e" stroke-width=".8" /></svg></button>
                <button aria-label="Move out"><svg viewBox="0 0 14 14"><path d="M3 7l7-6v12z" fill="#d4d4d4" stroke="#999" stroke-width=".8" /></svg></button>
                <button aria-label="Filter"><svg viewBox="0 0 14 14"><path d="M1 1h12L9 6v7H5.500V6z" fill="url(#blueTri)" stroke="#1c3a86" /></svg></button>
                <button aria-label="Columns"><svg viewBox="0 0 14 14"><path d="M1.500 1.500h11v12h-11zM1.500 7h11M1.500 10h11M5 1v12M9 1v12M1.500 4h11" fill="#fff" stroke="#888" /><path d="M1 1.500h12" stroke="#111" stroke-width="2" /></svg></button>
                <button aria-label="Menu"><svg viewBox="0 0 14 14"><path d="M1.500 2.500h11M1.500 7h11M1.500 11.500h11" stroke="#111" stroke-width="1.700" /></svg></button>
                <button aria-label="Help"><svg><use href="#help" /></svg></button>
              </div>
              <div class="flex items-center h-[19px] mt-[6px] mr-[1px] px-[7px] shrink-0 rounded-[5px] bg-white shadow-[0_0_1px_#999]">
                <svg viewBox="0 0 12 12" class="size-[12px] mr-[6px]"><circle cx="5" cy="5" r="4" fill="none" stroke="#222" /><path d="M8 8l3.500 3.500" stroke="#222" stroke-width="1.200" /></svg>
                <input type="text" aria-label="Search" placeholder="Search" class="flex-1 min-w-0 text-[12px] placeholder:text-[#b4b4b4]" />
              </div>
              <div class="flex-1 min-h-0 mt-[5px] overflow-hidden bg-white">
                <table class="w-full table-fixed text-left leading-[15px] [&_th]:font-normal [&_th]:p-0 [&_td]:p-0">
                  <colgroup><col class="w-[96px]" /><col class="w-[19px]" /><col class="w-[18px]" /><col class="w-[19px]" /><col class="w-[18px]" /><col /></colgroup>
                  <thead>
                    <tr class="h-[26px] border-b border-[#dcdcdc]">
                      <th><div class="pl-[25px]">Layer</div></th>
                      <th aria-label="Current"><div class="h-[14px] border-l border-[#dcdcdc]"></div></th>
                      <th aria-label="On"><div class="h-[14px] border-l border-[#dcdcdc]"></div></th>
                      <th aria-label="Locked"><div class="h-[14px] border-l border-[#dcdcdc]"></div></th>
                      <th aria-label="Color"><div class="h-[14px] border-l border-[#dcdcdc]"></div></th>
                      <th><div class="h-[14px] pl-[1px] border-l border-[#dcdcdc] whitespace-nowrap leading-[14px]">Material</div></th>
                    </tr>
                    <tr class="h-[5px]"><td colspan="6"></td></tr>
                  </thead>
                  <tbody id="layerRows" class="[&>tr]:h-[18px] [&>tr:nth-child(3n+2)]:h-[17px]"></tbody>
                </table>
              </div>
            </div>
            <!-- Panel tabs -->
            <div class="flex flex-col w-[18px] bg-[#d8d9dd] [&>button]:flex [&>button]:items-center [&>button]:justify-center [&>button]:h-[33px]">
              <button aria-label="Properties"><span class="flex items-center justify-center size-[13px] rounded-full bg-[conic-gradient(#f22,#f0f,#33f,#0df,#1d3,#ff0,#f22)] border border-[#777]"><span class="size-[6px] rounded-full bg-white"></span></span></button>
              <button aria-label="Display"><svg viewBox="0 0 14 14" class="size-[14px]"><path d="M.500 1.500h13v9H.500z" fill="#9c9c9c" stroke="#222" /><path d="M5 11h4v2H5z" fill="#222" /></svg></button>
              <button aria-label="Layers" class="rounded-r-[5px] bg-[#ebebeb]"><svg class="size-[13px]"><use href="#layers" /></svg></button>
              <button aria-label="Selection list"><svg viewBox="0 0 16 16" class="size-[15px]"><path d="M5 4h7M5 8h7M5 12h7" stroke="#777" /><path d="M5 5h7M5 9h7" stroke="#f0dc60" /><path d="M2 4h1M2 8h1M2 12h1M12.500 1h2.500v2.500M1 12.500V15h2" fill="none" stroke="#333" /></svg></button>
            </div>
          </div>
        </aside>
      </main>

      <!-- Status bar -->
      <footer class="flex items-center h-[25px] shrink-0 pl-[7px] pr-[8px] bg-[linear-gradient(#ebebeb,#d2d2d2)] text-[#4a4a4a] whitespace-nowrap">
        <button aria-label="Toggle left sidebar" class="w-[18px]"><svg viewBox="0 0 11 11" class="size-[11px]"><path d="M.500.500h10v10H.500z" fill="#fff" stroke="#111" /><path d="M1 1h4v9H1z" fill="#111" /></svg></button>
        <button aria-label="Command history" class="w-[31px]"><svg viewBox="0 0 13 12" class="w-[13px] h-[12px]"><path d="M3.500 1.500H13M3.500 6H13M3.500 10.500H13M0 1.500h1.500M0 6h1.500M0 10.500h1.500" stroke="#444" /></svg></button>
        <span class="w-[63px]">CPlane</span>
        <span class="w-[72px]">x -120.42</span>
        <span class="w-[77px]">y 64.72</span>
        <span class="w-[60px]">z 0</span>
        <span class="w-[77px]">185.14 mm</span>
        <span class="flex items-center gap-[6px] w-[109px]"><i class="size-[15px] bg-[#6e2bbd] border border-[#2c1050]"></i>3D Körper</span>
        <button class="w-[59px] text-left">Grid Snap</button>
        <button class="w-[43px] h-[18px] rounded-[2px] bg-[#f6f6f6] font-bold text-black">Ortho</button>
        <button class="w-[53px]">Planar</button>
        <button class="w-[48px] h-[18px] rounded-[2px] bg-[#f6f6f6] font-bold text-black">Osnap</button>
        <button class="w-[74px] h-[18px] ml-[2px] rounded-[2px] bg-[#f6f6f6] font-bold text-black">SmartTrack</button>
        <button class="w-[116px] pl-[13px] text-left">Gumball (CPlane)</button>
        <button class="flex items-center gap-[9px] w-[144px]"><svg viewBox="0 0 9 13" class="w-[9px] h-[13px]"><path d="M2 5.500V3c0-3 5-3 5 0v2.500M.500 5.500h8v7h-8z" fill="none" stroke="#888" /></svg>Auto CPlane (Object)</button>
        <button class="w-[85px] text-left">Record History</button>
        <button class="w-[40px] h-[18px] rounded-[2px] bg-[#f6f6f6] font-bold text-black">Filter</button>
        <span class="pl-[14px]">Memory use: 867 MB</span>
        <button aria-label="Toggle right sidebar" class="ml-auto"><svg viewBox="0 0 11 11" class="size-[11px]"><path d="M.500.500h10v10H.500z" fill="#fff" stroke="#111" /><path d="M6 1h4v9H6z" fill="#111" /></svg></button>
      </footer>
    </div>
  </div>

  <script>
    // Osnap list
    const snaps = [['End', 1], ['Near', 1], ['Point', 0], ['Mid', 1], ['Cen', 1], ['Int', 1], ['Perp', 0], ['Tan', 0], ['Quad', 0], ['Knot', 0], ['Vertex', 0], ['Project', 0], ['Disable', 0]];
    document.getElementById('snaps').innerHTML = snaps.map(([name, on]) => `
      <label class="relative flex items-center gap-[4px] h-[14px] last:mt-[15px]">
        <input type="checkbox" ${on ? 'checked' : ''} class="peer appearance-none size-[11px] rounded-[2px] bg-white checked:bg-[linear-gradient(#8a8a8a,#6c6c6c)] shadow-sm" />
        <svg viewBox="0 0 11 11" class="absolute left-0 hidden peer-checked:block size-[11px]"><path d="M2.500 6l2.200 2.500L8.500 2.500" fill="none" stroke="#fff" stroke-width="1.600" /></svg>
        <span>${name}</span>
      </label>`).join('');

    // Layer table
    const layers = [['Default', '#000000'], ['Hilfsebene', '#b8231a'], ['3D Körper', '#6e2bc4', true], ['Abwicklung', '#0000ff'], ['Schnittkanten', '#2f7a1e'], ['Faltkanten', '#ffffff']];
    document.getElementById('layerRows').innerHTML = layers.map(([name, color, current]) => `
      <tr class="${current ? 'bg-[#dcdcdc] font-bold text-black' : ''}">
        <td><div class="pl-[25px] whitespace-nowrap">${name}</div></td>
        <td>${current ? '<svg class="size-[13px] ml-[3px]"><use href="#tick" /></svg>' : ''}</td>
        <td>${current ? '' : '<svg class="w-[10px] h-[12px] mx-auto"><use href="#bulb" /></svg>'}</td>
        <td>${current ? '' : '<svg class="size-[12px] mx-auto"><use href="#unlocked" /></svg>'}</td>
        <td><div class="size-[12px] mx-auto border border-[#222]" style="background:${color}"></div></td>
        <td><div class="size-[15px] ml-[2px] rounded-full border border-[#999] bg-white"></div></td>
      </tr>`).join('');

    const line = (x1, y1, x2, y2, major) =>
      `<path d="M${x1} ${y1}L${x2} ${y2}" stroke="${major ? '#8f9497' : '#979ca2'}" stroke-width="${major ? 1 : 0.8}"/>`;

    // Flat construction grids: origin, step, bounds
    document.querySelectorAll('[data-grid]').forEach(g => {
      const [ox, oy, step, x0, y0, x1, y1] = g.dataset.grid.split(' ').map(Number);
      let out = '';
      for (let k = -40; k <= 40; k++) {
        const x = Math.floor(ox + k * step) + 0.5, y = Math.floor(oy + k * step) + 0.5;
        if (x > x0 && x < x1) out += line(x, y0, x, y1, k % 10 === 0);
        if (y > y0 && y < y1) out += line(x0, y, x1, y, k % 10 === 0);
      }
      g.innerHTML = out;
    });

    // Perspective floor grid
    const depth = (X, Y) => 1 + 0.00793 * X + 0.0255 * Y;
    const project = (X, Y) => [(1101.7 + 25.97 * X + 21.67 * Y) / depth(X, Y), (286.7 - 0.304 * X - 1.875 * Y) / depth(X, Y)].map(v => v.toFixed(1));
    let floor = '';
    for (let k = -70; k <= 90; k++) {
      const near = Math.max(-40, (0.1 - 1 - 0.00793 * k) / 0.0255);
      floor += line(...project(k, near), ...project(k, 90), k % 10 === 0);
      const left = Math.max(-70, (0.1 - 1 - 0.0255 * k) / 0.00793);
      if (k > -30) floor += line(...project(left, k), ...project(90, k), k % 10 === 0);
    }
    document.getElementById('floor').innerHTML = floor;
  </script>
</body>
</html>
